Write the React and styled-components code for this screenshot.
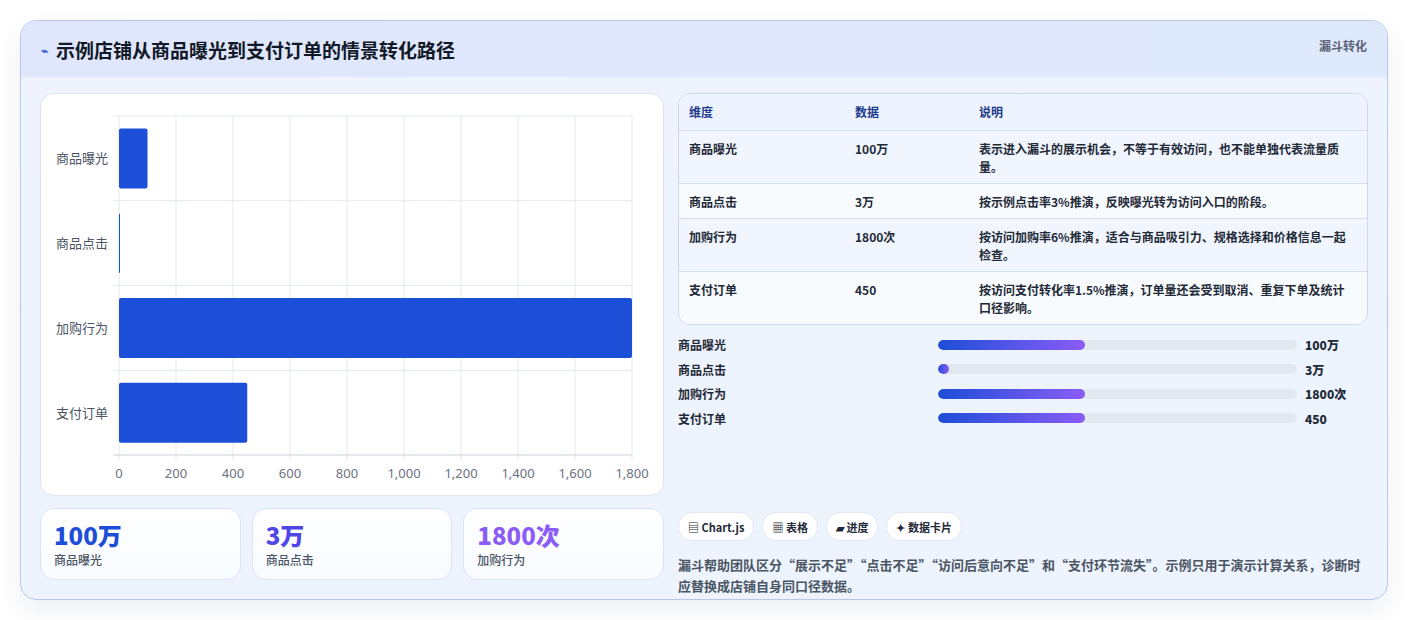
import React from 'react'
import styled, { createGlobalStyle } from 'styled-components'

const Global = createGlobalStyle`
  body { margin: 0; background: #fff; font-family: "Noto Sans CJK SC", "Noto Sans", sans-serif; }
`

const rows = [
  { name: '商品曝光', value: '100万', chart: 100, pct: 41, note: '表示进入漏斗的展示机会，不等于有效访问，也不能单独代表流量质量。' },
  { name: '商品点击', value: '3万', chart: 3, pct: 3, note: '按示例点击率3%推演，反映曝光转为访问入口的阶段。' },
  { name: '加购行为', value: '1800次', chart: 1800, pct: 41, note: '按访问加购率6%推演，适合与商品吸引力、规格选择和价格信息一起检查。' },
  { name: '支付订单', value: '450', chart: 450, pct: 41, note: '按访问支付转化率1.5%推演，订单量还会受到取消、重复下单及统计口径影响。' },
]

const Page = styled.div`
  padding: 20px 20px 20px 20px;
`
const Card = styled.div`
  width: 1368px;
  height: 580px;
  box-sizing: border-box;
  border: 1px solid #b9c6e6;
  border-radius: 16px;
  background: linear-gradient(180deg, #eef3fd, #edf4fe);
  box-shadow: 0 10px 24px rgba(30, 50, 100, 0.08);
  overflow: hidden;
`
const Header = styled.div`
  height: 56px;
  display: flex;
  align-items: center;
  justify-content: space-between;
  padding: 0 20px;
  background: linear-gradient(90deg, #e0e7fd, #dfe9fc);
`
const Title = styled.h1`
  margin: 0;
  font-size: 19px;
  font-weight: 700;
  color: #111827;
  display: flex;
  align-items: center;
  gap: 8px;
`
const Tag = styled.span`
  font-size: 12px;
  font-weight: 700;
  color: #5b6478;
  align-self: flex-start;
  margin-top: 16px;
`
const Body = styled.div`
  display: grid;
  grid-template-columns: 624px 690px;
  gap: 14px;
  padding: 16px 19px 0;
`
const Col = styled.div`
  display: flex;
  flex-direction: column;
`
const ChartBox = styled.div`
  height: 403px;
  background: #fff;
  border: 1px solid #dde5f3;
  border-radius: 14px;
  box-sizing: border-box;
`
const Stats = styled.div`
  display: grid;
  grid-template-columns: repeat(3, 1fr);
  gap: 11px;
  margin-top: 12px;
`
const Stat = styled.div`
  height: 72px;
  box-sizing: border-box;
  padding: 10px 13px;
  background: linear-gradient(180deg, #fff, #f8fbff);
  border: 1px solid #dbe4f6;
  border-radius: 14px;
`
const StatValue = styled.div`
  font-size: 24px;
  font-weight: 800;
  line-height: 32px;
  color: ${p => p.$c};
`
const StatLabel = styled.div`
  font-size: 12px;
  color: #4b5563;
  font-weight: 500;
`
const Table = styled.div`
  border: 1px solid #cdd8ee;
  border-radius: 12px;
  overflow: hidden;
  font-size: 12px;
  font-weight: 600;
  color: #1f2937;
`
const Row = styled.div`
  display: grid;
  grid-template-columns: 166px 124px 1fr;
  padding: ${p => (p.$head ? '9px 10px' : '9px 10px 7px')};
  min-height: ${p => (p.$head ? '16px' : '18px')};
  line-height: 18px;
  background: ${p => (p.$head ? '#eef4ff' : p.$alt ? '#f8fbfe' : '#f0f5fe')};
  color: ${p => (p.$head ? '#1e3a8a' : '#1f2937')};
  border-top: ${p => (p.$head ? 'none' : '1px solid #d5deef')};
  span:last-child { padding-right: 10px; }
`
const Bars = styled.div`
  display: flex;
  flex-direction: column;
  gap: 10px;
  margin-top: 11px;
`
const BarRow = styled.div`
  display: grid;
  grid-template-columns: 260px 359px 1fr;
  align-items: center;
  font-size: 12px;
  font-weight: 700;
  color: #1f2937;
  height: 14.5px;
  b { padding-left: 8px; }
`
const Track = styled.div`
  height: 10px;
  background: #e2e8f0;
  border-radius: 5px;
  overflow: hidden;
`
const Fill = styled.div`
  height: 100%;
  border-radius: 5px;
  background: linear-gradient(90deg, #1d4ed8, #8b5cf6);
`
const Chips = styled.div`
  display: flex;
  gap: 8px;
  margin-top: 88px;
`
const Chip = styled.span`
  height: 27px;
  padding: 0 9px;
  display: flex;
  align-items: center;
  gap: 4px;
  background: #fff;
  border: 1px solid #e1e7f2;
  border-radius: 14px;
  font-size: 11px;
  font-weight: 700;
  color: #1f2937;
`
const Note = styled.p`
  margin: 13px 0 0;
  font-size: 13px;
  font-weight: 600;
  line-height: 21px;
  color: #4b5563;
`

const X0 = 78, X1 = 591, Y0 = 22, Y1 = 361

function Chart() {
  const ticks = [0, 200, 400, 600, 800, 1000, 1200, 1400, 1600, 1800]
  const band = (Y1 - Y0) / 4
  return (
    <svg width="622" height="401" style={{ display: 'block' }}>
      {ticks.map(t => {
        const x = X0 + (t / 1800) * (X1 - X0)
        return (
          <g key={t}>
            <line x1={x} y1={Y0} x2={x} y2={Y1 + 6} stroke="#e3e8ef" />
            <text x={x} y={384} textAnchor="middle" fontSize="13" fill="#6b7280" fontFamily="Noto Sans">{t.toLocaleString('en-US')}</text>
          </g>
        )
      })}
      {[0, 1, 2, 3, 4].map(i => (
        <line key={i} x1={X0 - 6} y1={Y0 + i * band} x2={X1} y2={Y0 + i * band} stroke={i === 4 ? '#cbd2dc' : '#e3e8ef'} />
      ))}
      {rows.map((r, i) => {
        const y = Y0 + i * band
        const w = Math.max(1, (r.chart / 1800) * (X1 - X0))
        return (
          <g key={r.name}>
            <rect x={X0} y={y + 12.5} width={w} height={60} rx="2" fill="#1d4ed8" />
            <text x={X0 - 11} y={y + band / 2 + 5} textAnchor="end" fontSize="13" fill="#4b5563" fontFamily="Noto Sans CJK SC">{r.name}</text>
          </g>
        )
      })}
    </svg>
  )
}

export default function App() {
  return (
    <Page>
      <Global />
      <Card>
        <Header>
          <Title><span style={{ color: '#3b5bdb', fontSize: 12 }}>⌁</span>示例店铺从商品曝光到支付订单的情景转化路径</Title>
          <Tag>漏斗转化</Tag>
        </Header>
        <Body>
          <Col>
            <ChartBox><Chart /></ChartBox>
            <Stats>
              <Stat><StatValue $c="#1d4ed8">100万</StatValue><StatLabel>商品曝光</StatLabel></Stat>
              <Stat><StatValue $c="#4f46e5">3万</StatValue><StatLabel>商品点击</StatLabel></Stat>
              <Stat><StatValue $c="#8b5cf6">1800次</StatValue><StatLabel>加购行为</StatLabel></Stat>
            </Stats>
          </Col>
          <Col>
            <Table>
              <Row $head><span>维度</span><span>数据</span><span>说明</span></Row>
              {rows.map((r, i) => (
                <Row key={r.name} $alt={i % 2 === 1}><span>{r.name}</span><span>{r.value}</span><span>{r.note}</span></Row>
              ))}
            </Table>
            <Bars>
              {rows.map(r => (
                <BarRow key={r.name}>
                  <span>{r.name}</span>
                  <Track><Fill style={{ width: `${r.pct}%` }} /></Track>
                  <b>{r.value}</b>
                </BarRow>
              ))}
            </Bars>
            <Chips>
              <Chip>▤ Chart.js</Chip>
              <Chip>▦ 表格</Chip>
              <Chip>▰ 进度</Chip>
              <Chip>✦ 数据卡片</Chip>
            </Chips>
            <Note>漏斗帮助团队区分“展示不足”“点击不足”“访问后意向不足”和“支付环节流失”。示例只用于演示计算关系，诊断时应替换成店铺自身同口径数据。</Note>
          </Col>
        </Body>
      </Card>
    </Page>
  )
}
